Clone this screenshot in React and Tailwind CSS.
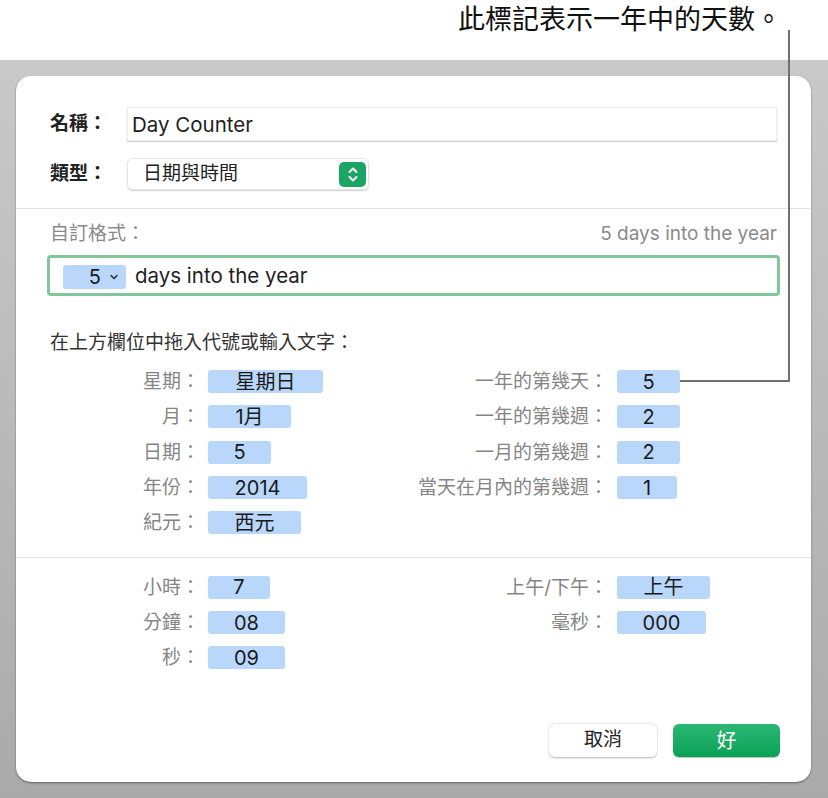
import React from "react";

const FONT = { fontFamily: 'Inter, "Noto Sans CJK TC", sans-serif' };

const DATE_LEFT = [
  { label: "星期：", value: "星期日", w: "w-[115px]" },
  { label: "月：", value: "1月", w: "w-[83px]" },
  { label: "日期：", value: "5", w: "w-[63px]" },
  { label: "年份：", value: "2014", w: "w-[99px]" },
  { label: "紀元：", value: "西元", w: "w-[93px]" },
];

const DATE_RIGHT = [
  { label: "一年的第幾天：", value: "5", w: "w-[63px]" },
  { label: "一年的第幾週：", value: "2", w: "w-[63px]" },
  { label: "一月的第幾週：", value: "2", w: "w-[63px]" },
  { label: "當天在月內的第幾週：", value: "1", w: "w-[60px]" },
];

const TIME_LEFT = [
  { label: "小時：", value: "7", w: "w-[62px]" },
  { label: "分鐘：", value: "08", w: "w-[77px]" },
  { label: "秒：", value: "09", w: "w-[77px]" },
];

const TIME_RIGHT = [
  { label: "上午/下午：", value: "上午", w: "w-[93px]" },
  { label: "毫秒：", value: "000", w: "w-[89px]" },
];

function Token({ value, w }) {
  return (
    <span className={`${w} h-[23px] rounded-[3px] bg-[#b9d7fb] flex items-center justify-center text-[20px] leading-none text-[#1a1a1a]`}>
      {value}
    </span>
  );
}

function TokenColumn({ rows, labelW, gap }) {
  return (
    <div className="flex flex-col">
      {rows.map((r) => (
        <div key={r.label} className={`h-[35.33px] flex items-center ${gap}`}>
          <span className={`${labelW} text-right text-[19px] leading-none text-[#858585]`}>{r.label}</span>
          <Token value={r.value} w={r.w} />
        </div>
      ))}
    </div>
  );
}

function Stepper() {
  return (
    <span className="w-[27px] h-[25px] rounded-[5px] bg-[#1ba463] flex items-center justify-center">
      <svg width="12" height="17" viewBox="0 0 12 17" fill="none" stroke="white" strokeWidth="2" strokeLinecap="round" strokeLinejoin="round">
        <path d="M2.5 6 L6 2.5 L9.5 6" />
        <path d="M2.5 11 L6 14.5 L9.5 11" />
      </svg>
    </span>
  );
}

export default function App() {
  return (
    <div className="w-[828px] h-[798px] relative bg-white overflow-hidden" style={FONT}>
      {/* callout */}
      <div className="h-[60px] flex justify-end pr-[46px] pt-[4px]">
        <span className="text-[27px] leading-[32px] text-[#111]">此標記表示一年中的天數。</span>
      </div>

      <div className="h-[738px] bg-gradient-to-b from-[#c9c9c9] to-[#aaaaaa] pt-[16px] pl-[16px] pr-[17px]">
        <div className="h-[706px] bg-white rounded-[15px] shadow-[0_1px_2px_rgba(0,0,0,0.45)] flex flex-col pt-[31px]">
          {/* name / type */}
          <div className="px-[34px] flex flex-col gap-[17px]">
            <div className="flex items-center">
              <span className="w-[77px] text-[19px] font-bold text-[#222]">名稱：</span>
              <div className="flex-1 h-[34px] border border-[#ececec] shadow-[0_1px_1px_rgba(0,0,0,0.18)] flex items-center pl-[4px] pt-[2px] text-[20.5px] text-[#1e1e1e]">
                Day Counter
              </div>
            </div>
            <div className="flex items-center">
              <span className="w-[77px] text-[19px] font-bold text-[#222]">類型：</span>
              <div className="w-[242px] h-[32px] rounded-[6px] border border-[#e6e6e6] shadow-[0_1px_1.5px_rgba(0,0,0,0.2)] flex items-center justify-between pl-[15px] pr-[2px]">
                <span className="text-[19px] text-[#222]">日期與時間</span>
                <Stepper />
              </div>
            </div>
          </div>

          <div className="h-px bg-[#e2e2e2] mt-[18px]" />

          {/* custom format */}
          <div className="px-[34px] mt-[13px] flex items-center justify-between h-[24px]">
            <span className="text-[19px] text-[#8a8a8a]">自訂格式：</span>
            <span className="text-[19px] text-[#8a8a8a]">5 days into the year</span>
          </div>
          <div className="mx-[31px] mt-[9px] h-[41px] border-[3px] border-[#82c79a] rounded-[4px] flex items-center pl-[13px] pt-[2px] gap-[9px]">
            <span className="w-[63px] h-[24px] rounded-[3px] bg-[#b9d7fb] flex items-center justify-end pr-[8px] gap-[9px] text-[20px] text-[#1a1a1a]">
              5
              <svg width="8" height="6" viewBox="0 0 8 6" fill="none" stroke="#333" strokeWidth="1.6" strokeLinecap="round" strokeLinejoin="round">
                <path d="M1 1.5 L4 4.5 L7 1.5" />
              </svg>
            </span>
            <span className="text-[20.5px] text-[#1e1e1e]">days into the year</span>
          </div>

          <div className="px-[34px] mt-[35px] h-[24px] flex items-center text-[19px] text-[#333]">
            在上方欄位中拖入代號或輸入文字：
          </div>

          {/* date tokens */}
          <div className="pl-[34px] mt-[9px] flex">
            <div className="w-[360px]">
              <TokenColumn rows={DATE_LEFT} labelW="w-[150px]" gap="gap-[8px]" />
            </div>
            <TokenColumn rows={DATE_RIGHT} labelW="w-[198px]" gap="gap-[9px]" />
          </div>

          <div className="h-px bg-[#e2e2e2] mt-[16px]" />

          {/* time tokens */}
          <div className="pl-[34px] mt-[12px] flex">
            <div className="w-[360px]">
              <TokenColumn rows={TIME_LEFT} labelW="w-[150px]" gap="gap-[8px]" />
            </div>
            <TokenColumn rows={TIME_RIGHT} labelW="w-[198px]" gap="gap-[9px]" />
          </div>

          {/* buttons */}
          <div className="mt-auto mb-[25px] pr-[31px] flex justify-end gap-[16px]">
            <button className="w-[108px] h-[33px] rounded-[6px] bg-white shadow-[0_0.5px_2px_rgba(0,0,0,0.3)] text-[19px] text-[#222]">
              取消
            </button>
            <button className="w-[107px] h-[33px] rounded-[6px] bg-gradient-to-b from-[#2ab773] to-[#06a157] shadow-[0_0.5px_1px_rgba(0,0,0,0.25)] text-[20px] text-white">
              好
            </button>
          </div>
        </div>
      </div>

      {/* callout leader line */}
      <div className="absolute left-[788px] top-[30px] w-[2px] h-[352px] bg-[#707070]" />
      <div className="absolute left-[680px] top-[380px] w-[110px] h-[2px] bg-[#707070]" />
    </div>
  );
}
